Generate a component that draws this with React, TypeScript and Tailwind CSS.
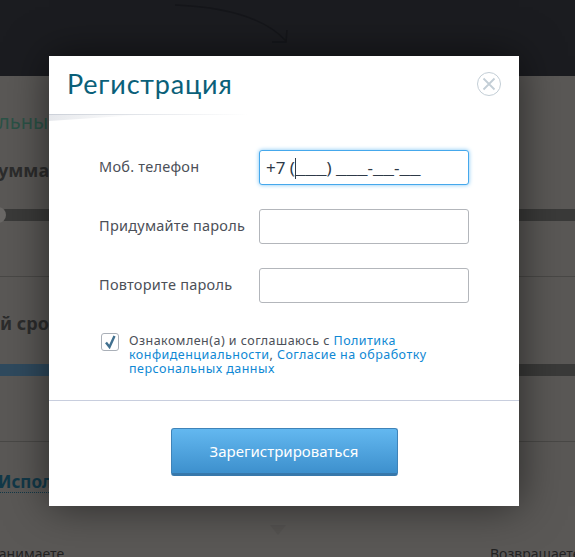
const bodyFont = "font-['Noto_Sans','DejaVu_Sans',sans-serif]"
const maskFont = "font-['Liberation_Mono',monospace] text-[17.5px]"

function Field({ label, children }: { label: string; children?: React.ReactNode }) {
  return (
    <div className="flex items-center h-[35px]">
      <label className="w-[160px] pb-[2px] text-[14.5px] text-[#4c5058] tracking-[0.25px] whitespace-nowrap">
        {label}
      </label>
      {children ?? (
        <input
          type="password"
          className="w-[210px] h-[35px] bg-white border border-[#b3b6bb] rounded-[3px] outline-none"
        />
      )}
    </div>
  )
}

function CloseIcon() {
  return (
    <svg width="24" height="24" viewBox="0 0 24 24" fill="none" stroke="#c3ced6">
      <circle cx="12" cy="12" r="11.5" />
      <path d="M6.5 6.5 17.5 17.5M17.5 6.5 6.5 17.5" strokeWidth="1.8" />
    </svg>
  )
}

export default function App() {
  return (
    <div className={`relative w-[575px] h-[557px] overflow-hidden bg-[#5a5856] ${bodyFont}`}>
      {/* затемнённая страница под окном */}
      <header className="h-[76px] bg-[#1b1c20] overflow-hidden">
        <svg width="300" height="48" viewBox="0 0 300 48" fill="none" stroke="#15161a" strokeWidth="1.5">
          <path d="M175 5C225 7 265 18 286 41M272 42H286L287 30" />
        </svg>
      </header>
      <main className="text-[#2c2c2c] whitespace-nowrap">
        <p className="mt-[34px] h-[24px] text-[20px] text-[#2b5246] leading-[24px] -ml-[2px]">льные</p>
        <p className="mt-[24px] h-[24px] text-[18px] font-bold leading-[24px] -ml-[2px]">умма в</p>
        <div className="relative mt-[27px] h-[12px] bg-[#3a3a39]">
          <span className="absolute -left-[10px] -top-[2px] w-[16px] h-[16px] rounded-full bg-[#6a6866]" />
        </div>
        <div className="mt-[55px] h-px bg-[#494846]" />
        <p className="mt-[34px] h-[24px] text-[18px] font-bold leading-[24px]">й срок</p>
        <div className="mt-[29px] flex h-[12px] bg-[#3a3a39]">
          <div className="w-[60px] bg-[#2f4a5e]" />
        </div>
        <div className="mt-[65px] h-px bg-[#494846]" />
        <p className="mt-[31px] w-[49px] h-[20px] overflow-hidden text-[17px] font-bold leading-[18px] text-[#123848] border-b border-dotted border-[#123848] indent-[-2px]">
          Использовать
        </p>
        <div className="mt-[51px] flex justify-between text-[14px] leading-[20px] text-[#222]">
          <span className="-ml-[8px]">занимаете</span>
          <span className="w-[85px]">Возвращаете</span>
        </div>
      </main>
      <svg className="absolute left-[270px] top-[525px]" width="16" height="10" viewBox="0 0 16 10" fill="#4f4d4c" opacity="0.4">
        <path d="M0 0H16L8 10Z" />
      </svg>

      {/* окно регистрации */}
      <div className="absolute left-[49px] top-[56px] w-[470px] h-[450px] bg-white shadow-[0_0_40px_rgba(0,0,0,0.55)]">
        <div className="flex justify-between items-start h-[58px] pl-[18px] pr-[18px] pt-[11px]">
          <h2 className="font-['Lato',sans-serif] text-[27px] leading-[34px] tracking-[0.8px] text-[#0a6079]">Регистрация</h2>
          <button className="mt-[5px]"><CloseIcon /></button>
        </div>
        <div className="h-px w-[200px] bg-linear-to-r from-[#ccd1d9] to-transparent" />
        <div className="h-[6px] w-[90px] bg-linear-to-r from-[#e6e8ec] to-transparent [clip-path:polygon(0_0,100%_0,0_100%)]" />

        <div className="pl-[50px] pt-[29px] flex flex-col gap-[24px]">
          <Field label="Моб. телефон">
            <div className="w-[210px] h-[35px] pl-[6px] bg-white border border-[#45a8ec] rounded-[3px] shadow-[0_0_4px_#7cc4f4] text-[17px] leading-[33px] text-[#2e3a48] whitespace-pre">
              +7 (<span className="inline-block w-px h-[21px] -mr-px align-[-5px] bg-[#2e3a48]" /><span className={maskFont}>___</span>) <span className={maskFont}>___</span>-<span className={maskFont}>__</span>-<span className={maskFont}>__</span>
            </div>
          </Field>
          <Field label="Придумайте пароль" />
          <Field label="Повторите пароль" />
        </div>

        <div className="flex ml-[52px] mt-[29px] w-[340px]">
          <span className="flex items-center justify-center shrink-0 w-[18px] h-[18px] mt-[1px] border border-[#aab0b8] rounded-[3px]">
            <svg width="13" height="14" viewBox="0 0 13 14" fill="none" stroke="#41708f" strokeWidth="2.4">
              <path d="M2 7.5 5.5 12 10.5 1" />
            </svg>
          </span>
          <p className="ml-[10px] pt-[2px] w-[305px] text-[12.5px] leading-[14px] text-[#4c5058] tracking-[0.47px]">
            Ознакомлен(а) и соглашаюсь с <a className="text-[#0f88d4]">Политика конфиденциальности</a>, <a className="text-[#0f88d4]">Согласие на обработку персональных данных</a>
          </p>
        </div>

        <div className="mt-[24px] h-px bg-[#c8cede]" />

        <div className="flex justify-center mt-[27px]">
          <button className="w-[227px] h-[48px] rounded-[3px] border border-[#3f83b8] border-b-[3px] border-b-[#3778ab] bg-linear-to-b from-[#63b8f0] to-[#3d90cd] text-[15px] text-white">
            Зарегистрироваться
          </button>
        </div>
      </div>
    </div>
  )
}
